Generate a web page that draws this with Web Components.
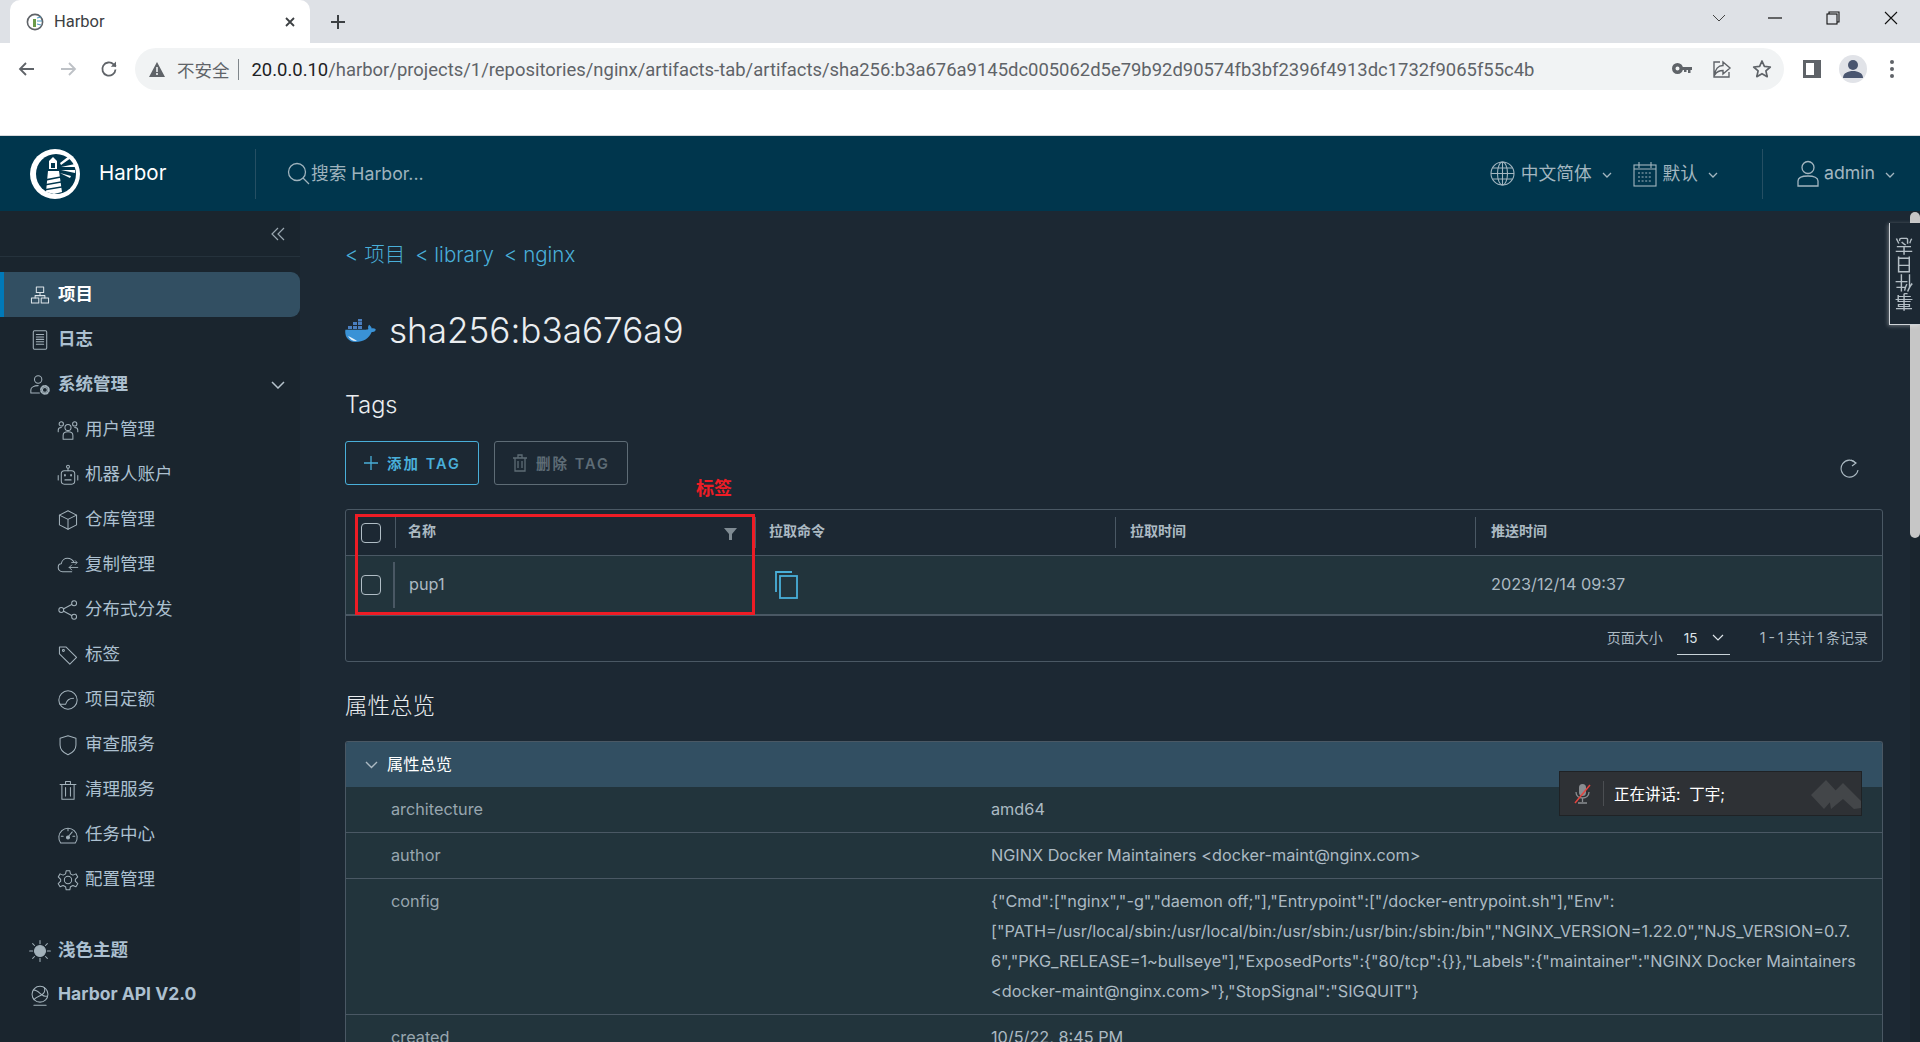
<!DOCTYPE html>
<html lang="zh-CN">
<head>
<meta charset="utf-8">
<title>Harbor</title>
<style>
  html, body { margin: 0; height: 100%; overflow: hidden; background: #1c2833; }
  body {
    display: flex;
    flex-direction: column;
    font-family: Inter, "Noto Sans CJK SC", sans-serif;
  }
  .app { display: flex; flex: 1; min-height: 0; }
</style>
</head>
<body>
<browser-chrome></browser-chrome>
<harbor-header></harbor-header>
<div class="app">
  <side-nav>
    <nav-item icon="project" active>项目</nav-item>
    <nav-item icon="log">日志</nav-item>
    <nav-item icon="admin" chevron>系统管理</nav-item>
    <nav-item icon="users" sub>用户管理</nav-item>
    <nav-item icon="robot" sub>机器人账户</nav-item>
    <nav-item icon="cube" sub>仓库管理</nav-item>
    <nav-item icon="cloud" sub>复制管理</nav-item>
    <nav-item icon="share" sub>分布式分发</nav-item>
    <nav-item icon="tag" sub>标签</nav-item>
    <nav-item icon="quota" sub>项目定额</nav-item>
    <nav-item icon="shield" sub>审查服务</nav-item>
    <nav-item icon="trash" sub>清理服务</nav-item>
    <nav-item icon="gauge" sub>任务中心</nav-item>
    <nav-item icon="cog" sub>配置管理</nav-item>
    <nav-item icon="sun" slot="foot">浅色主题</nav-item>
    <nav-item icon="api" slot="foot">Harbor API V2.0</nav-item>
  </side-nav>
  <artifact-page>
    <tag-table></tag-table>
    <prop-panel title="属性总览">
      <prop-row name="architecture">amd64</prop-row>
      <prop-row name="author">NGINX Docker Maintainers &lt;docker-maint@nginx.com&gt;</prop-row>
      <prop-row name="config">{"Cmd":["nginx","-g","daemon off;"],"Entrypoint":["/docker-entrypoint.sh"],"Env":<br>["PATH=/usr/local/sbin:/usr/local/bin:/usr/sbin:/usr/bin:/sbin:/bin","NGINX_VERSION=1.22.0","NJS_VERSION=0.7.<br>6","PKG_RELEASE=1~bullseye"],"ExposedPorts":{"80/tcp":{}},"Labels":{"maintainer":"NGINX Docker Maintainers<br>&lt;docker-maint@nginx.com&gt;"},"StopSignal":"SIGQUIT"}</prop-row>
      <prop-row name="created">10/5/22, 8:45 PM</prop-row>
    </prop-panel>
  </artifact-page>
</div>
<speaking-bar>正在讲话:&nbsp; 丁宇;</speaking-bar>
<event-tab>事件日志</event-tab>

<script>
const svg = (size, body, box = 36) =>
  `<svg width="${size}" height="${size}" viewBox="0 0 ${box} ${box}" fill="none" stroke="currentColor" stroke-width="1.700" stroke-linecap="round" stroke-linejoin="round">${body}</svg>`;

const ICONS = {
  project: '<rect x="12" y="5" width="12" height="9"/><rect x="4" y="23" width="12" height="8"/><rect x="20" y="23" width="12" height="8"/><path d="M18 14v5M10 23v-4h16v4"/>',
  log: '<rect x="7" y="3" width="22" height="30" rx="2"/><path d="M12 9h12M12 13h12M12 17h12M12 21h12M12 25h12"/>',
  admin: '<circle cx="15" cy="9" r="6"/><path d="M3 31v-5c0-4 5-7 12-7M3 31h14"/><circle cx="26" cy="26" r="4"/><circle cx="26" cy="26" r="6.5" stroke-width="3" stroke-dasharray="2.6 2.5"/>',
  users: '<circle cx="18" cy="14" r="5"/><path d="M10 33v-6c0-4 4-6 8-6s8 2 8 6v6z"/><circle cx="7" cy="8" r="3.5"/><circle cx="29" cy="8" r="3.5"/><path d="M2 21v-3c0-2 2-4 5-4M34 21v-3c0-2-2-4-5-4"/>',
  robot: '<rect x="7" y="11" width="22" height="22" rx="5"/><circle cx="18" cy="4.5" r="2.4"/><path d="M18 7v4M2 19v7M34 19v7M13 26h10"/><path d="M13 18v1M23 18v1" stroke-width="3"/>',
  cube: '<path d="M18 3 32 10v16l-14 7-14-7V10z"/><path d="M4 10l14 7 14-7M18 17v16"/>',
  cloud: '<path d="M24 29H9c-4 0-7-3-7-7 0-3 2-6 5-6 1-6 6-9 10-9 5 0 9 3 11 7"/><path d="M34 22H20M24 18l-4 4 4 4M24 14h8M30 11l3 3-3 3" stroke-width="1.5"/>',
  share: '<circle cx="28" cy="7" r="4"/><circle cx="7" cy="18" r="4"/><circle cx="28" cy="29" r="4"/><path d="M11 16 24 9M11 20l13 7"/>',
  tag: '<path d="M4 9V5h11l17 17-11 11L4 16z"/><circle cx="10.5" cy="10.5" r="1.6"/>',
  quota: '<circle cx="18" cy="18" r="15"/><path d="M5 25h9c2-7 6-10 13-10"/>',
  shield: '<path d="M18 3 31 7v11c0 8-6 13-13 16C11 31 5 26 5 18V7z"/>',
  trash: '<path d="M5 9h26M8 9v24h20V9M14 9V4h8v5M14 14v14M22 14v14"/>',
  gauge: '<path d="M6 31a15 15 0 1 1 24 0z"/><circle cx="18" cy="22" r="2.4" fill="currentColor"/><path d="M19 20l6-7M18 8v3M7 20h3M26 20h3"/>',
  cog: '<circle cx="18" cy="18" r="6"/><path d="M15 3h6l1 5 4 2 5-2 3 5-4 4v3l4 4-3 5-5-2-4 2-1 5h-6l-1-5-4-2-5 2-3-5 4-4v-3l-4-4 3-5 5 2 4-2z"/>',
  sun: '<circle cx="18" cy="18" r="9" fill="currentColor"/><path d="M18 1v5M18 30v5M1 18h5M30 18h5M6 6l3 3M27 27l3 3M30 6l-3 3M9 27l-3 3"/>',
  api: '<circle cx="18" cy="15" r="13"/><path d="M7 8c6 0 9 4 14 8s7 2 9 2M8 24c4-5 8-5 13-8s6-6 4-12"/><path d="M8 33h20"/>'
};

class BrowserChrome extends HTMLElement {
  constructor() {
    super();
    this.attachShadow({ mode: 'open' });
  }

  connectedCallback() {
    this.shadowRoot.innerHTML = `
      <style>
        :host { display: block; flex: none; font-family: Roboto, "Noto Sans CJK SC", sans-serif; background: #fff; }
        .strip { height: 43px; background: #dee1e6; display: flex; align-items: stretch; padding-left: 10px; color: #3c4043; }
        .tab {
          width: 300px; box-sizing: border-box; background: #fff; border-radius: 10px 10px 0 0;
          display: flex; align-items: center; padding: 0 14px 0 16px; gap: 10px; font-size: 16.500px;
        }
        .tab span { flex: 1; }
        .new { width: 56px; display: flex; align-items: center; justify-content: center; }
        .win { margin-left: auto; display: flex; align-items: center; color: #1f1f1f; padding-bottom: 8px; }
        .win div { width: 58px; display: flex; justify-content: center; }
        .bar { height: 92px; border-bottom: 1px solid #d7d9dc; box-sizing: content-box; }
        .tools { display: flex; align-items: center; height: 42px; padding-top: 5px; }
        .nav { width: 135px; display: flex; justify-content: space-around; box-sizing: border-box; padding: 0 6px; color: #5f6368; }
        .url {
          width: 1649px; height: 42px; box-sizing: border-box; background: #f1f3f4; border-radius: 21px;
          display: flex; align-items: center; padding-left: 14px; font-size: 18.430px; color: #5f6368; white-space: nowrap;
        }
        .url .warn { margin-right: 12px; display: flex; }
        .url .cn { font-size: 17.500px; }
        .url .sep { width: 1px; height: 21px; background: #80868b; margin: 0 13px 0 8px; }
        .url .addr { margin-top: 1px; }
        .url b { font-weight: 400; color: #202124; }
        .url .ends { margin-left: auto; display: flex; gap: 20px; padding-right: 12px; align-items: center; }
        .right { display: flex; align-items: center; color: #5f6368; margin-left: 19px; gap: 18px; }
        .avatar { width: 28px; height: 28px; border-radius: 50%; background: #e1e3e8; display: flex; align-items: center; justify-content: center; overflow: hidden; }
      </style>
      <div class="strip">
        <div class="tab">
          <svg width="18" height="18" viewBox="0 0 18 18" fill="none"><circle cx="9" cy="9" r="7.6" stroke="#5f6368" stroke-width="1.6"/><path d="M7 6h3v8H7z" fill="#6b9c4a"/><path d="M11 5l4-1M11 8h5M11 11l4 1" stroke="#4b9bc2" stroke-width="1.2"/></svg>
          <span>Harbor</span>
          <svg width="12" height="12" viewBox="0 0 12 12" stroke="#3c4043" stroke-width="1.8"><path d="M2 2l8 8M10 2l-8 8"/></svg>
        </div>
        <div class="new">
          <svg width="16" height="16" viewBox="0 0 16 16" stroke="#3c4043" stroke-width="2"><path d="M8 1v14M1 8h14"/></svg>
        </div>
        <div class="win">
          <div style="margin-right:-2px"><svg width="14" height="8" viewBox="0 0 14 8" fill="none" stroke="#444" stroke-width="1"><path d="M1 1l6 6 6-6"/></svg></div>
          <div><svg width="14" height="2" viewBox="0 0 14 2"><path d="M0 1h14" stroke="#111" stroke-width="1.2"/></svg></div>
          <div><svg width="14" height="14" viewBox="0 0 14 14" fill="none" stroke="#111" stroke-width="1.1"><rect x="1" y="3" width="10" height="10"/><path d="M3 3V1h10v10h-2"/></svg></div>
          <div><svg width="14" height="14" viewBox="0 0 14 14" stroke="#111" stroke-width="1.1"><path d="M1 1l12 12M13 1L1 13"/></svg></div>
        </div>
      </div>
      <div class="bar">
        <div class="tools">
          <div class="nav">
            <svg width="18" height="18" viewBox="0 0 18 18" fill="none" stroke="#5f6368" stroke-width="1.8"><path d="M16 9H2M8 3 2 9l6 6"/></svg>
            <svg width="18" height="18" viewBox="0 0 18 18" fill="none" stroke="#bdc1c6" stroke-width="1.8"><path d="M2 9h14M10 3l6 6-6 6"/></svg>
            <svg width="18" height="18" viewBox="0 0 18 18" fill="none" stroke="#5f6368" stroke-width="1.8"><path d="M15.500 9.500A6.600 6.600 0 1 1 13.600 4.400L16 6.500"/><path d="M16 1.500v5.200h-5.200" fill="#5f6368" stroke="none"/></svg>
          </div>
          <div class="url">
            <span class="warn"><svg width="16" height="15" viewBox="0 0 16 15"><path d="M8 0l8 15H0z" fill="#5f6368"/><path d="M7.200 5h1.600v5H7.200zM7.200 11h1.600v2H7.200z" fill="#f1f3f4"/></svg></span>
            <span class="cn">不安全</span><span class="sep"></span>
            <span class="addr"><b>20.0.0.10</b>/harbor/projects/1/repositories/nginx/artifacts-tab/artifacts/sha256:b3a676a9145dc005062d5e79b92d90574fb3bf2396f4913dc1732f9065f55c4b</span>
            <span class="ends">
              <svg width="20" height="12" viewBox="0 0 20 12" fill="#5f6368"><path d="M5.500 0a5.500 5.500 0 1 1-.001 11A5.500 5.500 0 0 1 5.500 0zm0 3.500a2 2 0 1 0 0 4 2 2 0 0 0 0-4zM10 4h10v3h-1.500v3h-2.500V7h-1.500v2H12V7h-2z"/></svg>
              <svg width="20" height="20" viewBox="0 0 20 20" fill="none" stroke="#5f6368" stroke-width="1.400"><path d="M8 3H2v15h15v-5M11 3l7 6-7 6v-3.500c-4 0-6 1-8 4 0-5 3-9 8-9z"/></svg>
              <svg width="20" height="20" viewBox="0 0 20 20" fill="none" stroke="#5f6368" stroke-width="1.700" stroke-linejoin="round"><path d="M10 2l2.400 5.400 5.900.6-4.400 3.900 1.300 5.800-5.200-3-5.200 3 1.300-5.800L1.700 8l5.900-.6z"/></svg>
            </span>
          </div>
          <div class="right">
            <svg width="18" height="18" viewBox="0 0 18 18"><path d="M0 0h18v18H0z" fill="#5f6368"/><path d="M3 3h8v12H3z" fill="#fff"/></svg>
            <span class="avatar"><svg width="20" height="22" viewBox="0 0 20 22" fill="#4a5670"><circle cx="10" cy="7" r="5"/><path d="M0 20c0-5 5-7 10-7s10 2 10 7z"/></svg></span>
            <svg width="6" height="20" viewBox="0 0 6 20" fill="#5f6368" style="margin-left:4px"><circle cx="3" cy="3" r="2"/><circle cx="3" cy="10" r="2"/><circle cx="3" cy="17" r="2"/></svg>
          </div>
        </div>
      </div>`;
  }
}

class HarborHeader extends HTMLElement {
  constructor() {
    super();
    this.attachShadow({ mode: 'open' });
  }

  connectedCallback() {
    const chev = `<svg class="c" width="10" height="6" viewBox="0 0 10 6" fill="none" stroke="currentColor" stroke-width="1.300"><path d="M1 1l4 4 4-4"/></svg>`;
    this.shadowRoot.innerHTML = `
      <style>
        :host {
          display: flex; flex: none; height: 75px; background: #00364d; align-items: center;
          color: #a3b6c0; font-size: 17.700px; padding-left: 30px; box-sizing: border-box;
        }
        span { padding-bottom: 4px; }
        .logo { width: 50px; height: 50px; flex: none; }
        .brand { color: #fff; font-size: 20.500px; margin-left: 19px; width: 156px; padding-bottom: 2px; }
        .rule { width: 1px; height: 50px; background: #254f63; flex: none; }
        .search { display: flex; align-items: center; margin-left: 31px; color: #9fb3bd; gap: 1px; }
        .menu { display: flex; align-items: center; gap: 6px; }
        .c { margin-left: 4px; margin-top: 2px; }
      </style>
      <svg class="logo" viewBox="0 0 50 50">
        <circle cx="25" cy="25" r="25" fill="#fff"/>
        <circle cx="26" cy="25" r="20" fill="#00364d"/>
        <path d="M18 22h11l3 21-8 2-8-2z" fill="#fff"/>
        <path d="M19 12l4-4 4 4v8h-8z" fill="#fff"/>
        <path d="M21 14h4v5h-4z" fill="#00364d"/>
        <path d="M16 30l16-3v1.500l-15 3zM15.500 35l17-3v1.500l-17 3zM15 40l18-3v1.500l-18 3z" fill="#00364d"/>
        <path d="M30 14l9-7 2 2-10 7zM31 18l14-3v3zM31 21h14v3zM30 24l11 3-1 2z" fill="#fff"/>
      </svg>
      <div class="brand">Harbor</div>
      <div class="rule"></div>
      <div class="search">
        <svg width="23" height="23" viewBox="0 0 23 23" fill="none" stroke="currentColor" stroke-width="1.300"><circle cx="10" cy="10" r="8.500"/><path d="M16 16l6 6"/></svg>
        <span>搜索 Harbor...</span>
      </div>
      <div class="menu" style="margin-left:auto">
        <svg width="25" height="25" viewBox="0 0 25 25" fill="none" stroke="currentColor" stroke-width="1.100"><circle cx="12.500" cy="12.500" r="11.500"/><ellipse cx="12.500" cy="12.500" rx="5" ry="11.500"/><path d="M1 12.500h23M3 7h19M3 18h19M12.500 1v23"/></svg>
        <span>中文简体</span>${chev}
      </div>
      <div class="menu" style="margin-left:21px">
        <svg width="24" height="26" viewBox="0 0 24 26" fill="none" stroke="currentColor" stroke-width="1.100"><rect x="1" y="4" width="22" height="21"/><path d="M6 1v6M18 1v6M1 8h22"/><path d="M5 12h14M5 16h14M5 20h14" stroke-dasharray="2 1.600"/></svg>
        <span>默认</span>${chev}
      </div>
      <div class="rule" style="margin-left:44px"></div>
      <div class="menu" style="margin-left:34px;margin-right:25px">
        <svg width="22" height="27" viewBox="0 0 22 27" fill="none" stroke="currentColor" stroke-width="1.300"><circle cx="11" cy="7.500" r="6"/><path d="M1 26v-5c0-3 4-5 10-5s10 2 10 5v5z"/></svg>
        <span style="margin-left:-1px;padding-bottom:2px">admin</span>${chev}
      </div>`;
  }
}

class SideNav extends HTMLElement {
  constructor() {
    super();
    this.attachShadow({ mode: 'open' });
  }

  connectedCallback() {
    this.shadowRoot.innerHTML = `
      <style>
        :host { display: block; flex: none; width: 300px; background: #1a252e; overflow: hidden; }
        .collapse { height: 45px; border-bottom: 1px solid #25323c; display: flex; justify-content: flex-end; align-items: center; padding-right: 15px; color: #9aa8b1; }
        .items { padding-top: 15px; }
        .foot { padding-top: 26px; }
      </style>
      <div class="collapse">
        <svg width="14" height="14" viewBox="0 0 14 14" fill="none" stroke="currentColor" stroke-width="1.200"><path d="M7 1 1 7l6 6M13 1 7 7l6 6"/></svg>
      </div>
      <div class="items"><slot></slot></div>
      <div class="foot"><slot name="foot"></slot></div>`;
  }
}

class NavItem extends HTMLElement {
  constructor() {
    super();
    this.attachShadow({ mode: 'open' });
  }

  connectedCallback() {
    const sub = this.hasAttribute('sub');
    const chev = this.hasAttribute('chevron')
      ? `<svg class="chev" width="14" height="8" viewBox="0 0 14 8" fill="none" stroke="currentColor" stroke-width="1.500"><path d="M1 1l6 6 6-6"/></svg>` : '';
    this.shadowRoot.innerHTML = `
      <style>
        :host {
          display: flex; align-items: center; height: 45px; box-sizing: border-box;
          padding-left: ${sub ? 57 : 29}px; gap: ${sub ? 6 : 7}px;
          font-size: 17.500px; font-weight: ${sub ? 400 : 700}; color: #acc0d0;
        }
        :host([active]) { background: #324f62; color: #fff; border-left: 4px solid #0079b8; padding-left: 25px; border-radius: 0 9px 9px 0; }
        span { padding-bottom: 5px; }
        svg.ic { flex: none; color: #a3b2bb; }
        :host([active]) svg.ic { color: #dbe3e8; }
        .chev { margin-left: auto; margin-right: 15px; color: #b6c3cc; }
      </style>
      ${svg(22, ICONS[this.getAttribute('icon')]).replace('<svg', '<svg class="ic"')}
      <span><slot></slot></span>${chev}`;
  }
}

class ArtifactPage extends HTMLElement {
  constructor() {
    super();
    this.attachShadow({ mode: 'open' });
  }

  connectedCallback() {
    this.shadowRoot.innerHTML = `
      <style>
        :host { display: flex; flex: 1; min-width: 0; overflow: hidden; color: #e9ecef; }
        .col { flex: 1; min-width: 0; padding: 32px 27px 0 45px; }
        .crumbs { display: flex; gap: 10px; height: 24px; line-height: 24px; font-size: 20.500px; color: #49afd9; font-weight: 300; }
        h1 { display: flex; align-items: center; margin: 42px 0 0; height: 44px; font-size: 35.100px; font-weight: 300; color: #eaedf0; gap: 13px; }
        h1 span { padding-bottom: 3px; }
        h2 { margin: 37px 0 0; font-size: 23.500px; line-height: 30px; font-weight: 300; color: #eaedf0; }
        .tools { display: flex; gap: 15px; margin-top: 21px; margin-bottom: 24px; }
        .btn {
          width: 134px; height: 44px; box-sizing: border-box; border: 1px solid #49afd9; border-radius: 3px;
          display: flex; align-items: center; justify-content: center; gap: 8px;
          color: #49afd9; font-size: 14.500px; font-weight: 600; letter-spacing: 2px; white-space: nowrap;
        }
        .btn span { padding-bottom: 2px; }
        .btn.off { border-color: #5e6c76; color: #5e6c76; }
        .refresh { margin-left: auto; margin-right: 24px; margin-top: 18px; color: #acbac3; }
        .bar { flex: none; width: 10px; background: #1a252e; }
        .thumb { margin-top: 1px; height: 326px; background: #c6c6c6; border-radius: 5px; }
      </style>
      <div class="col">
        <div class="crumbs"><span>&lt; 项目</span><span>&lt; library</span><span>&lt; nginx</span></div>
        <h1>
          <svg width="31" height="24" viewBox="0 0 31 24">
            <path d="M30.500 10c-.8-.6-2.500-.8-3.800-.5-.2-1.300-1-2.400-2-3.200l-.6-.5-.5.700c-.6 1-.8 2.500-.2 3.600-.4.300-1.300.6-2.400.6H.4c-.5 2.800 0 6.500 2.300 9 1.700 2 4.400 3.300 8 3.300 7.600 0 13.400-3.500 16-10 1.100 0 3.200 0 4-2z" fill="#3a92d6"/>
            <path d="M3 10h4V7H3zM8 10h4V7H8zM13 10h4V7h-4zM8 6h4V3H8zM13 6h4V3h-4zM13 2.500h4V0h-4z" fill="#4a7fc0"/>
            <path d="M3 17c3 1 6 3 9 5-4 .5-7-1.500-9-5z" fill="#e8f2fa"/>
          </svg>
          <span>sha256:b3a676a9</span>
        </h1>
        <h2>Tags</h2>
        <div class="tools">
          <div class="btn">
            <svg width="16" height="16" viewBox="0 0 16 16" stroke="currentColor" stroke-width="1.300"><path d="M8 1v14M1 8h14"/></svg>
            <span>添加 TAG</span>
          </div>
          <div class="btn off">
            <svg width="16" height="18" viewBox="0 0 16 18" fill="none" stroke="currentColor" stroke-width="1.300"><path d="M1 4h14M3 4v13h10V4M6 4V1h4v3M6 7v7M10 7v7"/></svg>
            <span>删除 TAG</span>
          </div>
          <svg class="refresh" width="19" height="20" viewBox="0 0 19 20" fill="none" stroke="currentColor" stroke-width="1.100"><path d="M16 4A8.500 8.500 0 1 0 18 11"/><path d="M11 1l5 3-4 3"/></svg>
        </div>
        <slot></slot>
      </div>
      <div class="bar"><div class="thumb"></div></div>`;
  }
}

class TagTable extends HTMLElement {
  constructor() {
    super();
    this.attachShadow({ mode: 'open' });
  }

  connectedCallback() {
    const box = `<span class="check"></span>`;
    this.shadowRoot.innerHTML = `
      <style>
        :host {
          display: block; position: relative; box-sizing: border-box; height: 153px;
          border: 1px solid #4a5864; border-radius: 3px; color: #acbac3;
        }
        .row { display: grid; grid-template-columns: 49px 360px 360px 360px 1fr; }
        .head { height: 45px; border-bottom: 1px solid #4a5864; font-size: 14px; font-weight: 700; }
        .body { height: 58px; background: #22343c; border-bottom: 2px solid #4a5864; font-size: 16.250px; }
        .cell { display: flex; align-items: center; padding-left: 11px; position: relative; }
        .head .txt { padding-bottom: 6px; }
        .body .txt { padding-bottom: 2px; }
        .head .cell + .cell::before {
          content: ""; position: absolute; left: 0; top: 7px; height: 31px; width: 1px; background: #4a5864;
        }
        .body .first::after {
          content: ""; position: absolute; right: 0; top: 6px; height: 46px; width: 2px; background: #4a5864;
        }
        .sel { padding-left: 15px; }
        .check { width: 20px; height: 20px; box-sizing: border-box; border: 1px solid #b0bdc5; border-radius: 4px; }
        .filter { margin-left: auto; margin-right: 18px; margin-top: 2px; }
        .copy { margin-left: 6px; color: #49afd9; }
        .foot {
          display: flex; align-items: center; justify-content: flex-end; height: 46px;
          font-size: 14px; padding-right: 14px; padding-bottom: 4px; box-sizing: border-box;
        }
        .size {
          width: 53px; height: 33px; box-sizing: border-box; border-bottom: 1px solid #c8d2d8;
          margin: 3px 30px 0 14px; display: flex; align-items: center; justify-content: space-between;
          padding: 0 6px 0 7px; color: #dfe6ea; font-size: 13.500px;
        }
        .count { word-spacing: -1px; }
        .mark { position: absolute; left: 9px; top: 4px; width: 400px; height: 101px; box-sizing: border-box; border: 3px solid #ee1c25; pointer-events: none; }
        .note { position: absolute; left: 350px; top: -33px; color: #ee1c25; font-size: 18px; font-weight: 700; line-height: 24px; }
      </style>
      <div class="row head">
        <div class="cell sel">${box}</div>
        <div class="cell" style="padding-left:13px"><span class="txt">名称</span>
          <svg class="filter" width="13" height="12" viewBox="0 0 13 12" fill="#7f8b93"><path d="M0 0h13L8 6v6H5V6z"/></svg>
        </div>
        <div class="cell" style="padding-left:14px"><span class="txt">拉取命令</span></div>
        <div class="cell" style="padding-left:15px"><span class="txt">拉取时间</span></div>
        <div class="cell" style="padding-left:16px"><span class="txt">推送时间</span></div>
      </div>
      <div class="row body">
        <div class="cell sel first">${box}</div>
        <div class="cell" style="padding-left:14px"><span class="txt">pup1</span></div>
        <div class="cell" style="padding-left:14px">
          <svg class="copy" width="24" height="28" viewBox="0 0 24 28" fill="none" stroke="currentColor" stroke-width="1.800"><rect x="5" y="5" width="17" height="22"/><path d="M1 21V1h16"/></svg>
        </div>
        <div class="cell"></div>
        <div class="cell" style="padding-left:16px"><span class="txt">2023/12/14 09:37</span></div>
      </div>
      <div class="foot">
        <span>页面大小</span>
        <span class="size"><span>15</span><svg width="12" height="8" viewBox="0 0 12 8" fill="none" stroke="#dfe6ea" stroke-width="1.200"><path d="M1 1l5 5 5-5"/></svg></span>
        <span class="count">1 - 1 共计 1 条记录</span>
      </div>
      <div class="mark"></div>
      <div class="note">标签</div>`;
  }
}

class PropPanel extends HTMLElement {
  constructor() {
    super();
    this.attachShadow({ mode: 'open' });
  }

  connectedCallback() {
    const title = this.getAttribute('title');
    this.shadowRoot.innerHTML = `
      <style>
        :host { display: block; color: #eaedf0; }
        h2 { margin: 29px 0 20px; font-size: 22.500px; line-height: 30px; font-weight: 300; }
        .box { border: 1px solid #4a5864; border-bottom: 0; border-radius: 3px 3px 0 0; overflow: hidden; }
        .top {
          height: 45px; background: #324f62; display: flex; align-items: center; gap: 9px;
          padding-left: 19px; font-size: 16.250px; color: #fff;
        }
        .top span { padding-bottom: 3px; }
        .top svg { color: #acbac3; }
      </style>
      <h2>${title}</h2>
      <div class="box">
        <div class="top">
          <svg width="13" height="8" viewBox="0 0 13 8" fill="none" stroke="currentColor" stroke-width="1.400"><path d="M1 1l5.500 5.500L12 1"/></svg>
          <span>${title}</span>
        </div>
        <slot></slot>
      </div>`;
  }
}

class PropRow extends HTMLElement {
  constructor() {
    super();
    this.attachShadow({ mode: 'open' });
  }

  connectedCallback() {
    this.shadowRoot.innerHTML = `
      <style>
        :host {
          display: grid; grid-template-columns: 600px 1fr; box-sizing: border-box;
          background: #22343c; border-bottom: 1px solid #4a5864;
          padding: 6.500px 8px 8.500px 45px; font-size: 16.250px; line-height: 30px; color: #acbac3; white-space: nowrap;
        }
        .name { color: #98a6af; }
      </style>
      <div class="name">${this.getAttribute('name')}</div>
      <div><slot></slot></div>`;
  }
}

class SpeakingBar extends HTMLElement {
  constructor() {
    super();
    this.attachShadow({ mode: 'open' });
  }

  connectedCallback() {
    this.shadowRoot.innerHTML = `
      <style>
        :host {
          position: fixed; left: 1559px; top: 771px; width: 303px; height: 45px; box-sizing: border-box;
          background: #2e3135; border: 1px solid #1f2225; display: flex; align-items: center;
          padding-left: 14px; color: #fff; font-size: 15.500px; overflow: hidden;
        }
        .sep { width: 1px; height: 25px; background: #4b4e52; margin: 0 10px 0 12px; }
        .txt { padding-bottom: 2px; }
        .wm { position: absolute; right: 0; top: 8px; }
      </style>
      <svg width="17" height="22" viewBox="0 0 17 22" fill="none">
        <rect x="5" y="1" width="7" height="12" rx="3.500" fill="#8a8d91"/>
        <path d="M2 9c0 4 3 6 6.500 6s6.500-2 6.500-6M8.500 15v4M4 20h9" stroke="#8a8d91" stroke-width="1.300"/>
        <path d="M1 20 16 2" stroke="#e5443f" stroke-width="1.500"/>
      </svg>
      <span class="sep"></span>
      <span class="txt"><slot></slot></span>
      <svg class="wm" width="50" height="30" viewBox="0 0 50 30" fill="#434649">
        <path d="M0 15 15 0l12 13-14 16zM18 17 32 3l18 18v7l-7 1-11-10-12 10z"/>
      </svg>`;
  }
}

class EventTab extends HTMLElement {
  constructor() {
    super();
    this.attachShadow({ mode: 'open' });
  }

  connectedCallback() {
    this.shadowRoot.innerHTML = `
      <style>
        :host {
          position: fixed; left: 1889px; top: 223px; width: 31px; height: 102px; box-sizing: border-box;
          background: #1c2833; border-left: 1px solid #cfd4d8; border-bottom: 1px solid #cfd4d8;
          box-shadow: -1px 1px 4px rgba(255,255,255,.35);
          display: flex; align-items: center; justify-content: center;
          color: #b4bec5; font-size: 18.500px;
        }
        span { writing-mode: vertical-rl; transform: rotate(180deg); line-height: 1; }
      </style>
      <span><slot></slot></span>`;
  }
}

customElements.define('browser-chrome', BrowserChrome);
customElements.define('harbor-header', HarborHeader);
customElements.define('side-nav', SideNav);
customElements.define('nav-item', NavItem);
customElements.define('artifact-page', ArtifactPage);
customElements.define('tag-table', TagTable);
customElements.define('prop-panel', PropPanel);
customElements.define('prop-row', PropRow);
customElements.define('speaking-bar', SpeakingBar);
customElements.define('event-tab', EventTab);
</script>
</body>
</html>
